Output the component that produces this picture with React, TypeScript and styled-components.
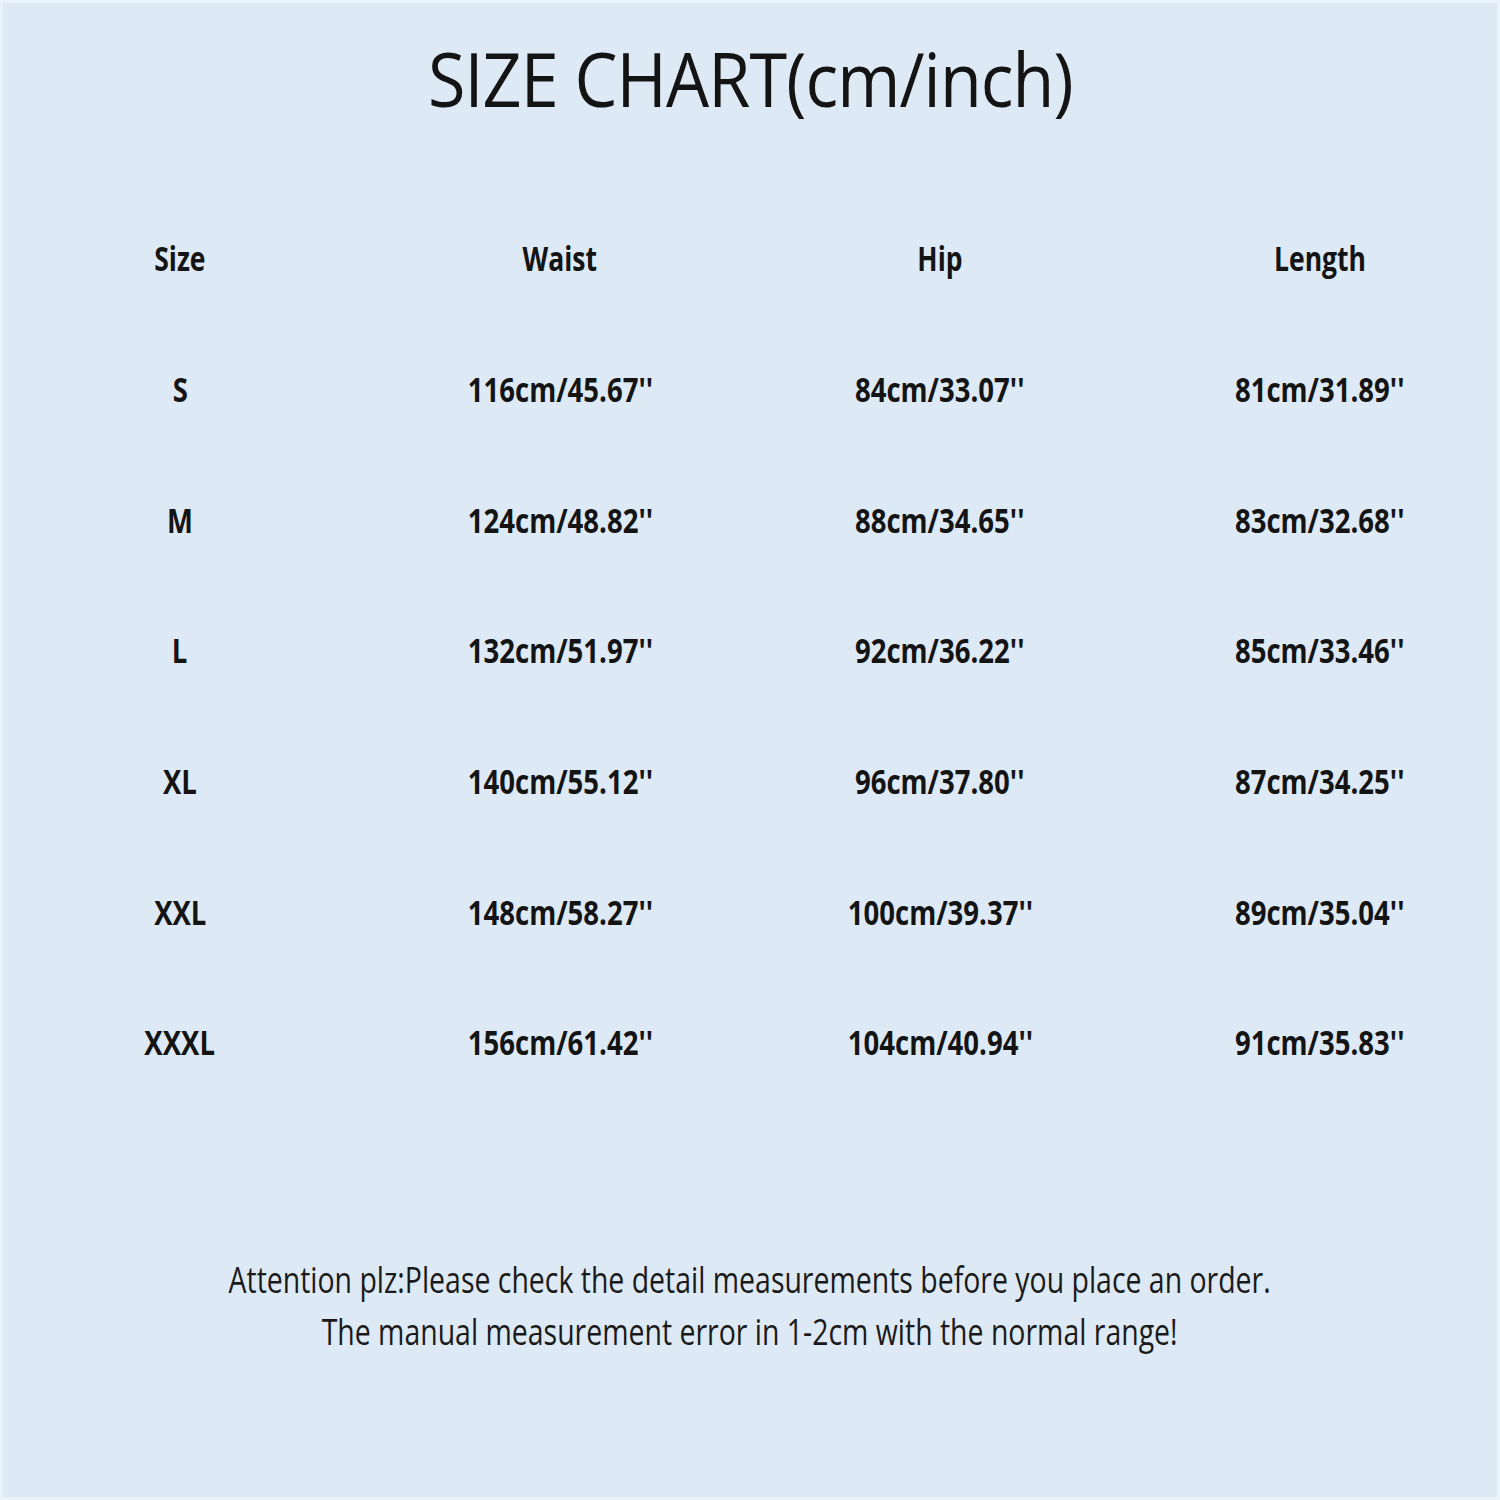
import React from "react";
import styled, { createGlobalStyle } from "styled-components";

const GlobalStyle = createGlobalStyle`
  html, body {
    margin: 0;
    padding: 0;
    background: #dde9f4;
  }
`;

const Page = styled.div`
  width: 1500px;
  height: 1500px;
  box-sizing: border-box;
  border: 3px solid #e8f3fc;
  background: #dde9f4;
  color: #141414;
  font-family: "Open Sans", "DejaVu Sans", sans-serif;
  display: flex;
  flex-direction: column;
  align-items: center;
  overflow: hidden;
`;

const TitleWrap = styled.div`
  height: 190px;
  width: 100%;
  display: flex;
  justify-content: center;
  align-items: flex-start;
  padding-top: 38px;
  box-sizing: border-box;
`;

const Title = styled.h1`
  margin: 0;
  font-size: 75px;
  font-weight: 400;
  line-height: 1;
  letter-spacing: -1px;
  transform: scaleX(0.91);
  white-space: nowrap;
`;

const Table = styled.div`
  display: grid;
  grid-template-columns: repeat(4, 380px);
  grid-auto-rows: 130.7px;
  justify-content: center;
  width: 1520px;
`;

const Cell = styled.div<{ $head?: boolean }>`
  display: flex;
  align-items: center;
  justify-content: center;
  font-size: 34px;
  font-weight: 700;
  line-height: 1;
  & > span {
    display: inline-block;
    white-space: nowrap;
    transform: scaleX(${(p) => (p.$head ? 0.78 : 0.81)});
  }
`;

const Note = styled.div`
  margin-top: 146px;
  text-align: center;
  font-size: 36px;
  line-height: 52px;
  font-weight: 400;
  color: #1a1a1a;
  & > p {
    margin: 0;
    white-space: nowrap;
    transform: scaleX(0.79);
  }
`;

const head = ["Size", "Waist", "Hip", "Length"];

const rows = [
  ["S", "116cm/45.67''", "84cm/33.07''", "81cm/31.89''"],
  ["M", "124cm/48.82''", "88cm/34.65''", "83cm/32.68''"],
  ["L", "132cm/51.97''", "92cm/36.22''", "85cm/33.46''"],
  ["XL", "140cm/55.12''", "96cm/37.80''", "87cm/34.25''"],
  ["XXL", "148cm/58.27''", "100cm/39.37''", "89cm/35.04''"],
  ["XXXL", "156cm/61.42''", "104cm/40.94''", "91cm/35.83''"],
];

export default function App() {
  return (
    <>
      <GlobalStyle />
      <Page>
        <TitleWrap>
          <Title>SIZE CHART(cm/inch)</Title>
        </TitleWrap>
        <Table>
          {head.map((h) => (
            <Cell key={h} $head>
              <span>{h}</span>
            </Cell>
          ))}
          {rows.map((r) =>
            r.map((v, i) => (
              <Cell key={r[0] + i}>
                <span>{v}</span>
              </Cell>
            ))
          )}
        </Table>
        <Note>
          <p>Attention plz:Please check the detail measurements before you place an order.</p>
          <p>The manual measurement error in 1-2cm with the normal range!</p>
        </Note>
      </Page>
    </>
  );
}
